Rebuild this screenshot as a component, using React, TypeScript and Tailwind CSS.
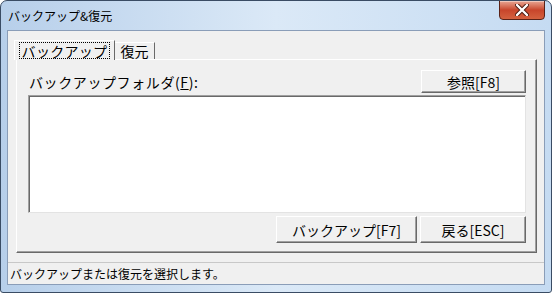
import React from "react";

const jp = { fontFamily: '"Noto Sans CJK JP", "Noto Sans", sans-serif' };

function ClassicButton({ label, className }: { label: string; className: string }) {
  return (
    <button
      className={`flex items-center justify-center bg-[#f0f0f0] border border-t-white border-l-white border-r-[#696969] border-b-[#696969] shadow-[inset_-1px_-1px_0_#a0a0a0] text-[14px] leading-none text-black ${className}`}
    >
      {label}
    </button>
  );
}

export default function App() {
  return (
    <div
      style={jp}
      className="relative w-[552px] h-[293px] overflow-hidden rounded-t-[7px] rounded-b-[3px] border border-[#3a4c64] bg-gradient-to-r from-[#b7cfea] via-[#dbe9f7] to-[#c5dbf2]"
    >
      {/* title bar */}
      <div className="h-[29px] flex items-center pl-[7px] text-[12px] leading-none text-black">
        バックアップ&amp;復元
      </div>

      {/* close button */}
      <div className="absolute top-[-1px] right-[6px] w-[46px] h-[20px] rounded-b-[4px] border border-[#5a2217] bg-gradient-to-b from-[#e7a593] via-[#c8452b] to-[#d4613f] flex items-center justify-center shadow-[inset_0_1px_0_rgba(255,255,255,0.4)]">
        <svg width="14" height="12" viewBox="0 0 14 12">
          <path d="M2 1 L12 11 M12 1 L2 11" stroke="#4a1a10" strokeWidth="4.2" strokeLinecap="round" />
          <path d="M2 1 L12 11 M12 1 L2 11" stroke="#ffffff" strokeWidth="2.4" strokeLinecap="round" />
        </svg>
      </div>

      {/* client area */}
      <div className="mx-[6px] h-[255px] border border-[#8a9db8] bg-[#f0f0f0] flex flex-col">
        <div className="flex-1 flex flex-col pt-[9px] pl-[6px] pr-[7px]">
          {/* tab headers */}
          <div className="flex items-end h-[20px] relative z-10">
            <div className="h-[20px] w-[101px] bg-[#f0f0f0] border-t border-l border-t-white border-l-white border-r border-r-[#696969] flex items-center justify-center">
              <span className="border border-dotted border-black px-[2px] h-[17px] flex items-center text-[14px] leading-none tracking-[0.3px]">
                バックアップ
              </span>
            </div>
            <div className="h-[17px] w-[40px] bg-[#f0f0f0] border-t border-t-white border-r border-r-[#696969] flex items-center justify-center text-[14px] leading-none mb-[1px]">
              復元
            </div>
          </div>

          {/* tab panel */}
          <div className="h-[194px] ml-[2px] -mt-[1px] border border-t-white border-l-white border-r-[#696969] border-b-[#696969] shadow-[inset_-1px_-1px_0_#a0a0a0] flex flex-col pl-[11px] pr-[10px] pt-[10px]">
            <div className="flex items-center justify-between h-[23px]">
              <span className="text-[14px] leading-none pl-[1px] pt-[1px] tracking-[0.6px]">
                バックアップフォルダ(<span className="underline">F</span>):
              </span>
              <ClassicButton label="参照[F8]" className="w-[105px] h-[23px]" />
            </div>
            <div className="mt-[2px] h-[118px] bg-white border border-t-[#a0a0a0] border-l-[#a0a0a0] border-r-[#e3e3e3] border-b-[#e3e3e3] shadow-[inset_1px_1px_0_#696969]" />
            <div className="flex justify-end gap-[3px] mt-[3px]">
              <ClassicButton label="バックアップ[F7]" className="w-[141px] h-[27px]" />
              <ClassicButton label="戻る[ESC]" className="w-[106px] h-[27px]" />
            </div>
          </div>
        </div>

        {/* status bar */}
        <div className="h-[22px] border-t border-[#c8c8c8] flex items-center pl-[2px] text-[12px] leading-none">
          バックアップまたは復元を選択します。
        </div>
      </div>
    </div>
  );
}
